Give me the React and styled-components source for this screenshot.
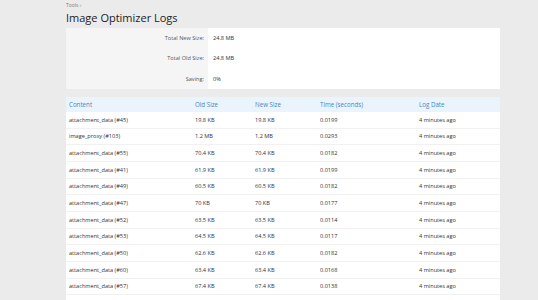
import React from "react";
import styled, { createGlobalStyle } from "styled-components";

const GlobalStyle = createGlobalStyle`
  html, body {
    margin: 0;
    padding: 0;
    background: #ebebeb;
    font-family: "Open Sans", "Noto Sans", sans-serif;
  }
`;

const Page = styled.div`
  width: 434px;
  margin-left: 66px;
  padding-top: 1px;
`;

const Crumb = styled.div`
  font-size: 5px;
  color: #7a7a7a;
  height: 7px;
  line-height: 7px;
  margin-top: 1px;
`;

const Title = styled.h1`
  margin: 0;
  font-size: 11px;
  font-weight: 400;
  color: #222;
  height: 19px;
  line-height: 18px;
`;

const StatsBox = styled.div`
  display: grid;
  grid-template-columns: 142px 1fr;
  background: #fff;
  height: 61px;
`;

const LabelCol = styled.div`
  background: #f5f5f5;
  display: flex;
  flex-direction: column;
`;

const ValueCol = styled.div`
  display: flex;
  flex-direction: column;
`;

const Cell = styled.div`
  height: 20.33px;
  display: flex;
  align-items: center;
  font-size: 5.6px;
  color: ${(p) => (p.$label ? "#555" : "#333")};
  justify-content: ${(p) => (p.$label ? "flex-end" : "flex-start")};
  padding: ${(p) => (p.$label ? "0 4px 0 0" : "0 0 0 5px")};
`;

const Table = styled.div`
  margin-top: 8px;
  background: #fff;
  padding-bottom: 20px;
`;

const Row = styled.div`
  display: grid;
  grid-template-columns: 126px 60px 65px 99px 1fr;
  height: ${(p) => (p.$head ? "15px" : "16.67px")};
  align-items: center;
  background: ${(p) => (p.$head ? "#eaf4fc" : "#fff")};
  border-bottom: ${(p) => (p.$head ? "none" : "1px solid #f1f1f1")};
  box-sizing: border-box;
`;

const Col = styled.div`
  padding-left: 3px;
  font-size: ${(p) => (p.$head ? "6.2px" : "5.6px")};
  color: ${(p) => (p.$head ? "#4a86be" : "#333")};
  white-space: nowrap;
`;

const stats = [
  ["Total New Size:", "24.8 MB"],
  ["Total Old Size:", "24.8 MB"],
  ["Saving:", "0%"],
];

const logs = [
  ["attachment_data (#45)", "19.8 KB", "19.8 KB", "0.0199"],
  ["image_proxy (#103)", "1.2 MB", "1.2 MB", "0.0293"],
  ["attachment_data (#55)", "70.4 KB", "70.4 KB", "0.0182"],
  ["attachment_data (#41)", "61.9 KB", "61.9 KB", "0.0199"],
  ["attachment_data (#49)", "60.5 KB", "60.5 KB", "0.0182"],
  ["attachment_data (#47)", "70 KB", "70 KB", "0.0177"],
  ["attachment_data (#52)", "63.5 KB", "63.5 KB", "0.0114"],
  ["attachment_data (#53)", "64.5 KB", "64.5 KB", "0.0117"],
  ["attachment_data (#50)", "62.6 KB", "62.6 KB", "0.0182"],
  ["attachment_data (#60)", "63.4 KB", "63.4 KB", "0.0168"],
  ["attachment_data (#57)", "67.4 KB", "67.4 KB", "0.0138"],
];

const headers = ["Content", "Old Size", "New Size", "Time (seconds)", "Log Date"];

const App = () => {
  return (
    <>
      <GlobalStyle />
      <Page>
        <Crumb>Tools ›</Crumb>
        <Title>Image Optimizer Logs</Title>
        <StatsBox>
          <LabelCol>
            {stats.map((s) => (
              <Cell $label key={s[0]}>
                {s[0]}
              </Cell>
            ))}
          </LabelCol>
          <ValueCol>
            {stats.map((s) => (
              <Cell key={s[0]}>{s[1]}</Cell>
            ))}
          </ValueCol>
        </StatsBox>
        <Table>
          <Row $head>
            {headers.map((h) => (
              <Col $head key={h}>
                {h}
              </Col>
            ))}
          </Row>
          {logs.map((log, i) => (
            <Row key={i}>
              {log.map((v, j) => (
                <Col key={j}>{v}</Col>
              ))}
              <Col>4 minutes ago</Col>
            </Row>
          ))}
        </Table>
      </Page>
    </>
  );
};

export default App;
